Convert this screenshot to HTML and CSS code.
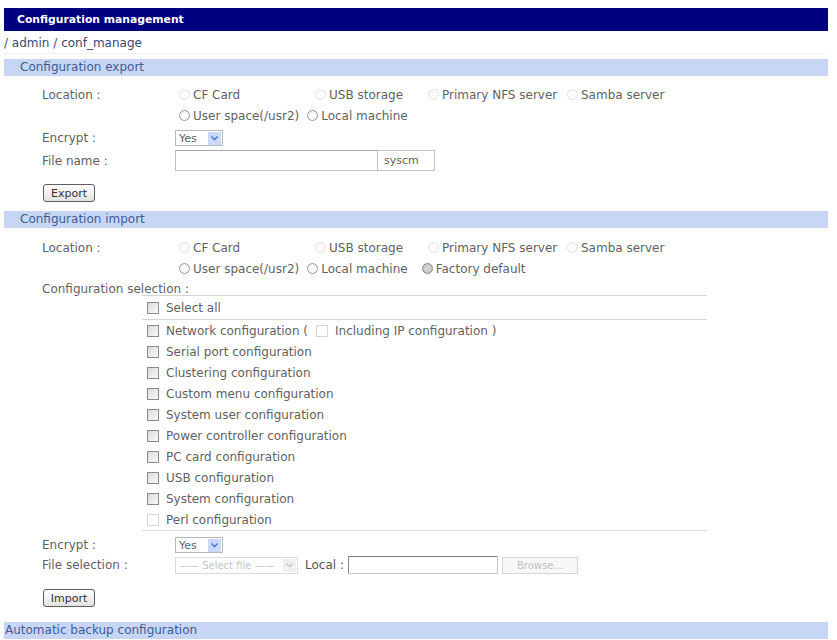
FILE: index.html
```html
<!DOCTYPE html>
<html lang="en">
<head>
    <meta charset="UTF-8">
    <title>Configuration management</title>
    <link rel="stylesheet" href="styles.css">
</head>
<body>

<div class="page">
    <div class="titlebar">Configuration management</div>
    <div class="crumb">/ admin / conf_manage</div>

    <!-- Export -->
    <div class="section-head">Configuration export</div>
    <div class="section-body export-body">
        <div class="row">
            <div class="row-label">Location :</div>
            <div class="choices">
                <label class="choice w136"><input type="radio" class="radio" name="exloc" disabled>CF Card</label>
                <label class="choice w113"><input type="radio" class="radio" name="exloc" disabled>USB storage</label>
                <label class="choice w139"><input type="radio" class="radio" name="exloc" disabled>Primary NFS server</label>
                <label class="choice"><input type="radio" class="radio" name="exloc" disabled>Samba server</label>
            </div>
        </div>
        <div class="row">
            <div class="row-label"></div>
            <div class="choices">
                <label class="choice"><input type="radio" class="radio" name="exloc">User space(/usr2)</label>
                <label class="choice"><input type="radio" class="radio" name="exloc">Local machine</label>
            </div>
        </div>
        <div class="row row-encrypt">
            <div class="row-label">Encrypt :</div>
            <div class="select select-yes">
                <span class="select-value">Yes</span>
                <span class="select-arrow"><svg width="7" height="5" viewBox="0 0 7 5"><path d="M0.5 0.5 L3.5 3.8 L6.5 0.5" fill="none" stroke="#4a72c4" stroke-width="1.4"/></svg></span>
            </div>
        </div>
        <div class="row row-file">
            <div class="row-label">File name :</div>
            <input type="text" class="text-input filename">
            <span class="suffix">syscm</span>
        </div>
        <div class="button-row export-btn-row">
            <button class="btn">Export</button>
        </div>
    </div>

    <!-- Import -->
    <div class="section-head">Configuration import</div>
    <div class="section-body import-body">
        <div class="row">
            <div class="row-label">Location :</div>
            <div class="choices">
                <label class="choice w136"><input type="radio" class="radio" name="imloc" disabled>CF Card</label>
                <label class="choice w113"><input type="radio" class="radio" name="imloc" disabled>USB storage</label>
                <label class="choice w139"><input type="radio" class="radio" name="imloc" disabled>Primary NFS server</label>
                <label class="choice"><input type="radio" class="radio" name="imloc" disabled>Samba server</label>
            </div>
        </div>
        <div class="row">
            <div class="row-label"></div>
            <div class="choices">
                <label class="choice"><input type="radio" class="radio" name="imloc">User space(/usr2)</label>
                <label class="choice"><input type="radio" class="radio" name="imloc">Local machine</label>
                <label class="choice factory"><input type="radio" class="radio radio-dark" name="imloc">Factory default</label>
            </div>
        </div>
        <div class="sel-title">Configuration selection :</div>

        <div class="conf-list">
            <label class="conf-item select-all"><input type="checkbox" class="check">Select all</label>
            <label class="conf-item first"><input type="checkbox" class="check">Network configuration (<input type="checkbox" class="check inner" disabled>Including IP configuration )</label>
            <label class="conf-item"><input type="checkbox" class="check">Serial port configuration</label>
            <label class="conf-item"><input type="checkbox" class="check">Clustering configuration</label>
            <label class="conf-item"><input type="checkbox" class="check">Custom menu configuration</label>
            <label class="conf-item"><input type="checkbox" class="check">System user configuration</label>
            <label class="conf-item"><input type="checkbox" class="check">Power controller configuration</label>
            <label class="conf-item"><input type="checkbox" class="check">PC card configuration</label>
            <label class="conf-item"><input type="checkbox" class="check">USB configuration</label>
            <label class="conf-item"><input type="checkbox" class="check">System configuration</label>
            <label class="conf-item"><input type="checkbox" class="check" disabled>Perl configuration</label>
        </div>

        <div class="row row-small import-encrypt">
            <div class="row-label">Encrypt :</div>
            <div class="select select-yes">
                <span class="select-value">Yes</span>
                <span class="select-arrow"><svg width="7" height="5" viewBox="0 0 7 5"><path d="M0.5 0.5 L3.5 3.8 L6.5 0.5" fill="none" stroke="#4a72c4" stroke-width="1.4"/></svg></span>
            </div>
        </div>
        <div class="row row-small">
            <div class="row-label">File selection :</div>
            <div class="select select-file disabled">
                <span class="select-value">—— Select file ——</span>
                <span class="select-arrow"><svg width="7" height="5" viewBox="0 0 7 5"><path d="M0.5 0.5 L3.5 3.8 L6.5 0.5" fill="none" stroke="#c4c4c4" stroke-width="1.4"/></svg></span>
            </div>
            <span class="local-label">Local :</span>
            <input type="text" class="text-input local-input">
            <button class="browse" disabled>Browse...</button>
        </div>
        <div class="button-row import-btn-row">
            <button class="btn">Import</button>
        </div>
    </div>

    <div class="section-head last">Automatic backup configuration</div>
</div>

</body>
</html>
```

FILE: styles.css
```css
body {
    margin: 0;
    padding: 0;
    font-family: "DejaVu Sans", Verdana, sans-serif;
    font-size: 12px;
    color: #626262;
    background-color: #fff;
}

.page {
    width: 824px;
    margin: 8px 0 0 4px;
}

.titlebar {
    height: 23px;
    line-height: 23px;
    background-color: #00007f;
    color: #fff;
    font-weight: bold;
    font-size: 10.8px;
    padding-left: 13px;
}

.crumb {
    height: 22px;
    line-height: 24px;
    color: #3a4a72;
    border-bottom: 1px solid #f2f2f2;
    margin-bottom: 5px;
}

/* Section bars */
.section-head {
    height: 17px;
    line-height: 17px;
    background-color: #c6d6f4;
    color: #3f5c98;
    padding-left: 16px;
}

.section-head.last {
    padding-left: 1px;
}

.section-body {
    padding-left: 38px;
}

.export-body {
    padding-top: 8px;
    padding-bottom: 9px;
}

.import-body {
    padding-top: 9px;
    padding-bottom: 15px;
}

.row {
    display: flex;
    align-items: center;
    height: 21px;
}

.row-label {
    width: 133px;
    flex: none;
}

.choices {
    display: flex;
    align-items: center;
}

.choice {
    display: flex;
    align-items: center;
    white-space: nowrap;
    margin-right: 4px;
}

.w136 { width: 136px; margin-right: 0; }
.w113 { width: 113px; margin-right: 0; }
.w139 { width: 139px; margin-right: 0; }

.choice.factory {
    margin-left: 6px;
}

/* Radio buttons and check boxes */
.radio {
    appearance: none;
    width: 11px;
    height: 11px;
    margin: 0 3px 0 4px;
    border: 1px solid #9a9a9a;
    border-radius: 50%;
    background: radial-gradient(circle at 60% 60%, #ffffff 30%, #e2e2e2 100%);
    flex: none;
}

.radio:disabled {
    border-color: #e2e2e2;
    background: #fcfcfc;
}

.radio-dark {
    border-color: #8a8a8a;
    background: radial-gradient(circle at 50% 50%, #d4d4d4 30%, #b8b8b8 100%);
}

.check {
    appearance: none;
    width: 12px;
    height: 12px;
    margin: 0 7px 0 0;
    border: 1px solid #8a8a8a;
    background: linear-gradient(135deg, #dadada, #fafafa);
    flex: none;
}

.check:disabled {
    border-color: #d6d6d6;
    background: #fff;
}

.check.inner {
    margin: 0 7px 0 8px;
}

/* Selects */
.select {
    display: flex;
    align-items: center;
    height: 16px;
    border: 1px solid #b8b8b8;
    box-sizing: border-box;
    background: #fff;
    font-size: 11px;
}

.select-value {
    flex: 1;
    padding-left: 3px;
    white-space: nowrap;
}

.select-arrow {
    width: 13px;
    height: 13px;
    margin-right: 1px;
    background-color: #c9d9f6;
    display: flex;
    align-items: center;
    justify-content: center;
}

.select-yes {
    width: 48px;
}

.select-file {
    width: 123px;
    height: 17px;
}

.select.disabled {
    border-color: #dcdcdc;
    color: #c6c6c6;
    font-size: 10px;
}

.select.disabled .select-arrow {
    background-color: #f0f0f0;
}

/* Text boxes */
.row-encrypt {
    height: 22px;
    margin-top: 1px;
}

.row-file {
    height: 23px;
}

.text-input {
    box-sizing: border-box;
    margin: 0;
    padding: 0 4px;
    font-family: inherit;
    font-size: 11px;
    background: #fff;
}

.filename {
    width: 203px;
    height: 21px;
    border: 1px solid #c2c2c2;
    border-top-color: #a8a8a8;
}

.suffix {
    box-sizing: border-box;
    width: 57px;
    height: 21px;
    line-height: 19px;
    padding-left: 6px;
    border: 1px solid #c2c2c2;
    border-left: none;
    font-size: 11px;
}

.button-row {
    padding-left: 1px;
}

.export-btn-row {
    margin-top: 12px;
}

.import-btn-row {
    margin-top: 14px;
}

.btn {
    width: 52px;
    height: 18px;
    padding: 0;
    border: 1px solid #5e5e5e;
    border-radius: 3px;
    background: linear-gradient(#ffffff, #e2e2e2);
    font-family: inherit;
    font-size: 11px;
    color: #333;
}

/* Configuration selection list */
.sel-title {
    height: 16px;
    line-height: 20px;
}

.conf-list {
    width: 565px;
    margin-left: 100px;
    border-top: 1px solid #d4d4d4;
    border-bottom: 1px solid #dedede;
}

.conf-item {
    display: flex;
    align-items: center;
    height: 21px;
    padding-left: 5px;
    white-space: nowrap;
}

.conf-item.select-all {
    height: 23px;
    border-bottom: 1px solid #d4d4d4;
}

.row-small {
    height: 20px;
}

.import-encrypt {
    margin-top: 4px;
}

.local-label {
    margin-left: 7px;
    margin-right: 4px;
    color: #555;
}

.local-input {
    width: 150px;
    height: 18px;
    border: 1px solid #c8c8c8;
    border-top-color: #7e7e7e;
    border-left-color: #8a8a8a;
}

.browse {
    width: 76px;
    height: 17px;
    margin-left: 4px;
    padding: 0;
    border: 1px solid #d6d6d6;
    background: #f7f7f7;
    font-family: inherit;
    font-size: 10px;
    color: #c2c2c2;
}
```
